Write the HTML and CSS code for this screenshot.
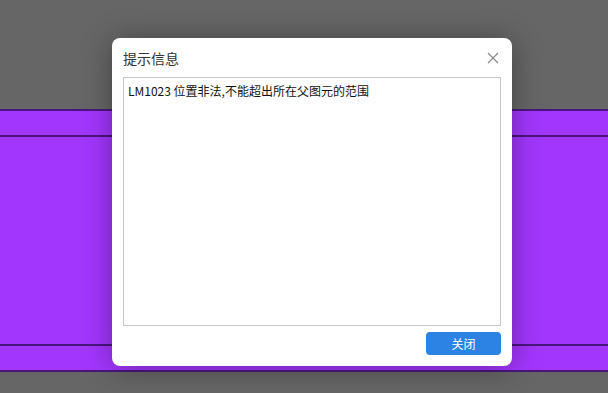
FILE: index.html
```html
<!DOCTYPE html>
<html lang="zh-CN">
<head>
<meta charset="UTF-8" />
<title>提示信息</title>
<link rel="stylesheet" href="styles.css">
</head>
<body>
  <!-- Fond : bande violette sous le masque -->
  <div class="band">
    <div class="band-row top"></div>
    <div class="band-row middle"></div>
    <div class="band-row bottom"></div>
  </div>

  <!-- Boîte de dialogue -->
  <div class="dialog">
    <div class="dialog-header">
      <span class="dialog-title">提示信息</span>
      <span class="dialog-close" title="关闭">
        <svg width="12" height="12" viewBox="0 0 12 12">
          <path d="M1 1 L11 11 M11 1 L1 11" stroke="#8a8a8a" stroke-width="1.2" fill="none" />
        </svg>
      </span>
    </div>
    <div class="dialog-body">
      <div class="message">LM1023 位置非法,不能超出所在父图元的范围</div>
    </div>
    <div class="dialog-footer">
      <button class="btn-close">关闭</button>
    </div>
  </div>
</body>
</html>
```

FILE: styles.css
```css
/* ========== Global ========== */
html, body {
  margin: 0;
  height: 100%;
  overflow: hidden;
}
body {
  position: relative;
  background: #666666;
  font-family: "Noto Sans CJK SC", "Noto Sans", sans-serif;
  padding-top: 109px;
  box-sizing: border-box;
}
/* Bande violette */
.band {
  display: flex;
  flex-direction: column;
  background: #a236fd;
  border-top: 2px solid #4a167e;
  border-bottom: 2px solid #4a167e;
}
.band-row.top {
  height: 24px;
  border-bottom: 2px solid #4a167e;
}
.band-row.middle {
  height: 207px;
  border-bottom: 2px solid #4a167e;
}
.band-row.bottom {
  height: 24px;
}
/* Dialogue */
.dialog {
  position: absolute;
  left: 112px;
  top: 38px;
  width: 400px;
  height: 328px;
  background: #ffffff;
  border-radius: 8px;
  box-shadow: 0 2px 30px rgba(0, 0, 0, 0.35);
  display: flex;
  flex-direction: column;
  box-sizing: border-box;
  padding: 0 11px 11px 11px;
}
.dialog-header {
  height: 39px;
  display: flex;
  align-items: center;
  justify-content: space-between;
}
.dialog-title {
  font-size: 14px;
  color: #333333;
  padding-top: 1px;
}
.dialog-close {
  display: flex;
  width: 12px;
  height: 12px;
  margin-right: 2px;
  margin-top: 0px;
  cursor: pointer;
}
.dialog-body {
  flex: 1;
  border: 1px solid #c8c8c8;
  padding: 3px 4px;
  overflow: auto;
}
.message {
  font-size: 12px;
  color: #111111;
  line-height: 20px;
}
.dialog-footer {
  display: flex;
  justify-content: flex-end;
  padding-top: 6px;
}
.btn-close {
  width: 75px;
  height: 23px;
  border: none;
  border-radius: 4px;
  background: #2d83e3;
  color: #ffffff;
  font-family: inherit;
  font-size: 12px;
  cursor: pointer;
  padding: 0;
}
.btn-close:hover {
  background: #1f6fcb;
}
```
